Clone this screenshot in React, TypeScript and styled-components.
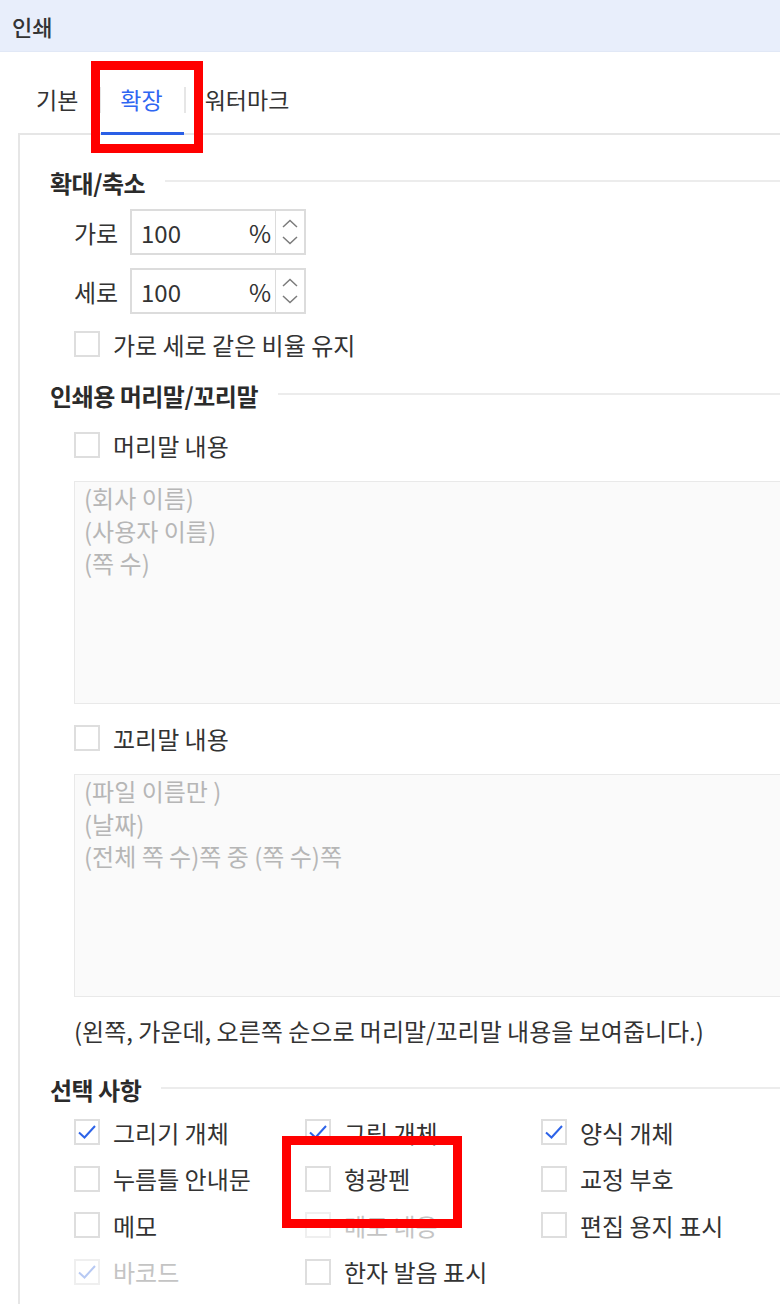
import React from "react";
import styled, { createGlobalStyle } from "styled-components";

const Global = createGlobalStyle`
  html, body { margin: 0; padding: 0; background: #ffffff; }
  body {
    font-family: "Noto Sans CJK KR", "Noto Sans", sans-serif;
    color: #333333;
    overflow: hidden;
  }
  * { box-sizing: border-box; }
`;

const Page = styled.div`
  position: relative;
  width: 780px;
  height: 1304px;
  overflow: hidden;
  background: #ffffff;
`;

const Header = styled.div`
  height: 52px;
  background: #e8eefb;
  border-bottom: 1px solid #e1e8f6;
  display: flex;
  align-items: center;
  padding-left: 12px;
  font-size: 22px;
  font-weight: 500;
  color: #333333;
`;

const TabBar = styled.div`
  height: 81px;
  display: flex;
  align-items: flex-end;
  padding-left: 17px;
`;

const Tab = styled.div<{ $active?: boolean }>`
  position: relative;
  z-index: 2;
  height: 58px;
  padding: 0 21px 10px 19px;
  display: flex;
  align-items: center;
  font-size: 23px;
  line-height: 1;
  color: ${(p) => (p.$active ? "#2f66f2" : "#333333")};
  border-bottom: 3px solid ${(p) => (p.$active ? "#2a5fe6" : "transparent")};
  margin-bottom: -2px;
`;

const TabSep = styled.div`
  width: 2px;
  height: 26px;
  background: #e6e6e6;
  align-self: flex-end;
  margin-bottom: 20px;
`;

const Panel = styled.div`
  margin-left: 18px;
  border-top: 2px solid #e6e6e6;
  border-left: 2px solid #e6e6e6;
  padding: 32px 0 40px 30px;
  min-height: 1200px;
`;

const SectionHead = styled.div<{ $mt?: number }>`
  display: flex;
  align-items: center;
  gap: 20px;
  height: 30px;
  margin-top: ${(p) => p.$mt ?? 0}px;
  font-size: 24px;
  font-weight: 700;
  letter-spacing: -0.5px;
  color: #2b2b2b;
  white-space: nowrap;
`;

const HeadLine = styled.div`
  flex: 1;
  height: 2px;
  background: #ececec;
  margin-top: -2px;
`;

const Indent = styled.div<{ $mt?: number }>`
  margin-left: 24px;
  margin-top: ${(p) => p.$mt ?? 0}px;
`;

const FieldRow = styled.div`
  display: flex;
  align-items: center;
  gap: 10px;
  height: 46px;
  font-size: 24px;
  color: #333333;
`;

const FieldLabel = styled.span`
  width: 46px;
  white-space: nowrap;
`;

const NumberBox = styled.div`
  width: 176px;
  height: 46px;
  border: 2px solid #dcdcdc;
  display: flex;
  align-items: stretch;
`;

const NumberValue = styled.div`
  flex: 1;
  display: flex;
  align-items: center;
  justify-content: space-between;
  padding: 0 4px 0 9px;
  font-size: 24px;
  color: #333333;
`;

const Spinner = styled.div`
  width: 29px;
  border-left: 1px solid #dcdcdc;
  display: flex;
  flex-direction: column;
  align-items: center;
  justify-content: center;
  gap: 8px;
`;

const CheckRow = styled.label<{ $disabled?: boolean }>`
  display: flex;
  align-items: center;
  gap: 13px;
  height: 30px;
  font-size: 24px;
  white-space: nowrap;
  color: ${(p) => (p.$disabled ? "#c4c4c4" : "#333333")};
`;

const Box = styled.span<{ $disabled?: boolean }>`
  width: 26px;
  height: 26px;
  flex: none;
  border: 2px solid ${(p) => (p.$disabled ? "#efefef" : "#dedede")};
  background: #ffffff;
  display: flex;
  align-items: center;
  justify-content: center;
`;

const TextArea = styled.div<{ $mt?: number }>`
  margin-top: ${(p) => p.$mt ?? 0}px;
  height: 223px;
  width: 720px;
  background: #fafafa;
  border: 1px solid #e9e9e9;
  border-right: none;
  padding: 0 0 0 9px;
  font-size: 24px;
  line-height: 32.5px;
  color: #b6b6b6;
  white-space: pre;
`;

const Note = styled.div<{ $mt?: number }>`
  margin-top: ${(p) => p.$mt ?? 0}px;
  height: 30px;
  line-height: 30px;
  font-size: 24px;
  color: #333333;
  white-space: nowrap;
`;

const OptionGrid = styled.div`
  margin-top: 13px;
  display: grid;
  grid-template-columns: 231px 236px 1fr;
  grid-auto-rows: 30px;
  row-gap: 16.6px;
`;

const Highlight = styled.div<{ $l: number; $t: number; $w: number; $h: number }>`
  position: absolute;
  left: ${(p) => p.$l}px;
  top: ${(p) => p.$t}px;
  width: ${(p) => p.$w}px;
  height: ${(p) => p.$h}px;
  border: 9px solid #ff0000;
  z-index: 10;
  pointer-events: none;
`;

const Chevron = ({ up }: { up?: boolean }) => (
  <svg width="16" height="9" viewBox="0 0 16 9">
    <path
      d={up ? "M1 8 L8 1.5 L15 8" : "M1 1 L8 7.5 L15 1"}
      fill="none"
      stroke="#7b7b7b"
      strokeWidth="1.5"
    />
  </svg>
);

const CheckMark = ({ faded }: { faded?: boolean }) => (
  <svg width="20" height="16" viewBox="0 0 20 16">
    <path
      d="M2 8.5 L7.5 13.5 L18 2"
      fill="none"
      stroke={faded ? "#b7c9f3" : "#2d63e8"}
      strokeWidth="2"
    />
  </svg>
);

const Check = ({
  label,
  checked,
  disabled,
}: {
  label: string;
  checked?: boolean;
  disabled?: boolean;
}) => (
  <CheckRow $disabled={disabled}>
    <Box $disabled={disabled}>{checked && <CheckMark faded={disabled} />}</Box>
    <span>{label}</span>
  </CheckRow>
);

const NumberField = ({ label }: { label: string }) => (
  <FieldRow>
    <FieldLabel>{label}</FieldLabel>
    <NumberBox>
      <NumberValue>
        <span>100</span>
        <span>%</span>
      </NumberValue>
      <Spinner>
        <Chevron up />
        <Chevron />
      </Spinner>
    </NumberBox>
  </FieldRow>
);

const options: { label: string; checked?: boolean; disabled?: boolean }[] = [
  { label: "그리기 개체", checked: true },
  { label: "그림 개체", checked: true },
  { label: "양식 개체", checked: true },
  { label: "누름틀 안내문" },
  { label: "형광펜" },
  { label: "교정 부호" },
  { label: "메모" },
  { label: "메모 내용", disabled: true },
  { label: "편집 용지 표시" },
  { label: "바코드", checked: true, disabled: true },
  { label: "한자 발음 표시" },
];

export default function App() {
  return (
    <Page>
      <Global />
      <Header>인쇄</Header>
      <TabBar>
        <Tab>기본</Tab>
        <TabSep />
        <Tab $active>확장</Tab>
        <TabSep />
        <Tab>워터마크</Tab>
      </TabBar>
      <Panel>
        <SectionHead>
          확대/축소
          <HeadLine />
        </SectionHead>
        <Indent $mt={12}>
          <NumberField label="가로" />
        </Indent>
        <Indent $mt={13}>
          <NumberField label="세로" />
        </Indent>
        <Indent $mt={15}>
          <Check label="가로 세로 같은 비율 유지" />
        </Indent>

        <SectionHead $mt={21}>
          인쇄용 머리말/꼬리말
          <HeadLine />
        </SectionHead>
        <Indent $mt={20}>
          <Check label="머리말 내용" />
        </Indent>
        <Indent>
          <TextArea $mt={21}>{"(회사 이름)\n(사용자 이름)\n(쪽 수)"}</TextArea>
        </Indent>
        <Indent $mt={19}>
          <Check label="꼬리말 내용" />
        </Indent>
        <Indent>
          <TextArea $mt={21}>
            {"(파일 이름만 )\n(날짜)\n(전체 쪽 수)쪽 중 (쪽 수)쪽"}
          </TextArea>
        </Indent>
        <Indent>
          <Note $mt={19}>
            (왼쪽, 가운데, 오른쪽 순으로 머리말/꼬리말 내용을 보여줍니다.)
          </Note>
        </Indent>

        <SectionHead $mt={28}>
          선택 사항
          <HeadLine />
        </SectionHead>
        <Indent>
          <OptionGrid>
            {options.map((o) => (
              <Check
                key={o.label}
                label={o.label}
                checked={o.checked}
                disabled={o.disabled}
              />
            ))}
          </OptionGrid>
        </Indent>
      </Panel>
      <Highlight $l={91} $t={61} $w={112} $h={92} />
      <Highlight $l={282} $t={1136} $w={180} $h={92} />
    </Page>
  );
}
